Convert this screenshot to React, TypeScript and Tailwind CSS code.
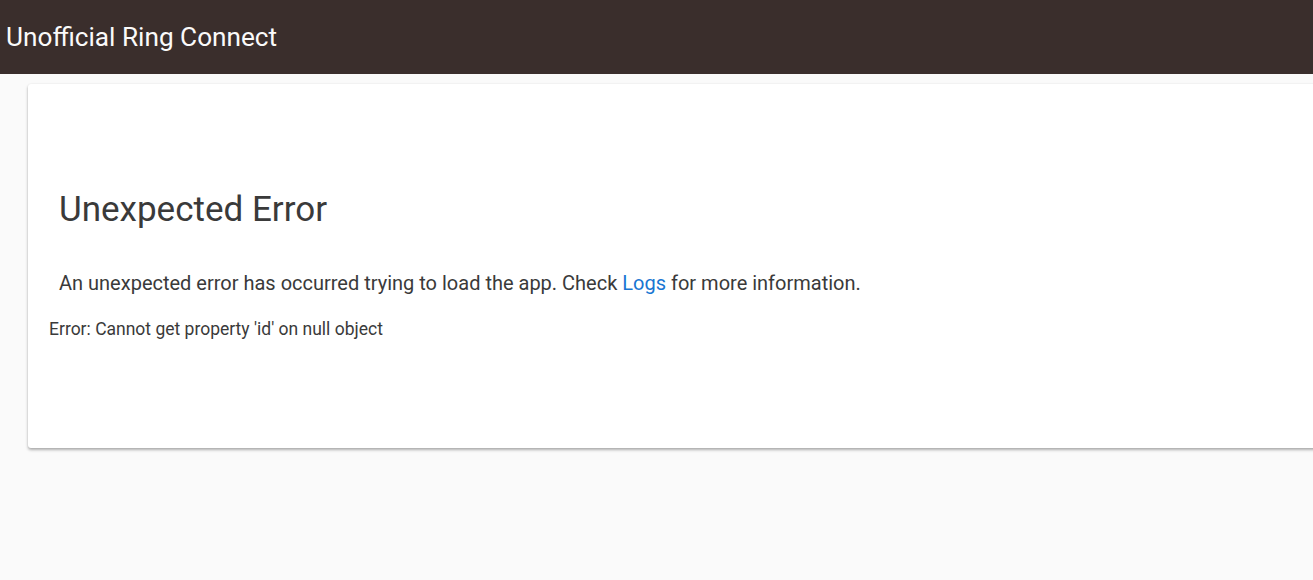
export default function App() {
  return (
    <div className="min-h-screen w-full overflow-hidden bg-[#fafafa] font-['Roboto',sans-serif]">
      <header className="flex h-[74px] items-center bg-[#3a2e2c] px-[6px]">
        <h1 className="text-[26.2px] leading-none text-[#fafafa]">Unofficial Ring Connect</h1>
      </header>

      <div className="ml-[28px] mr-[-20px] mt-[10px] rounded-[3px] bg-white pb-[107px] pt-[105px] shadow-[0_2px_3px_rgba(0,0,0,0.3),0_0_2px_rgba(0,0,0,0.08)]">
        <div className="px-[31px]">
          <h2 className="text-[35px] leading-[41px] text-[#3a3a3a]">Unexpected Error</h2>
          <p className="mt-[38px] text-[20px] leading-[30px] text-[#3a3a3a]">
            An unexpected error has occurred trying to load the app. Check{" "}
            <a className="text-[#1976d2]">Logs</a> for more information.
          </p>
        </div>
        <div className="mt-[19px] px-[21px] text-[17.5px] leading-[24px] text-[#3a3a3a]">
          Error: Cannot get property 'id' on null object
        </div>
      </div>
    </div>
  );
}
